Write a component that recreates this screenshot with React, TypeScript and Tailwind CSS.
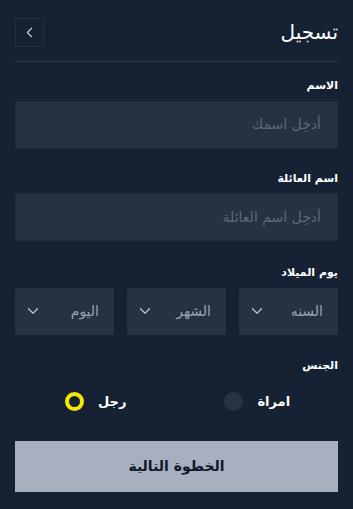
import { ChevronDown, ChevronLeft } from "lucide-react";

const FONT = { fontFamily: '"DejaVu Sans", "Liberation Sans", sans-serif' };

function Label({ children }: { children: string }) {
  return <div className="mb-[6px] text-[11px] font-bold text-white">{children}</div>;
}

function Input({ placeholder }: { placeholder: string }) {
  return (
    <div className="flex h-[48px] items-center rounded-[2px] border border-[#222d3e] bg-[#263142] px-[16px] text-[14px] text-[#5f6877]">
      {placeholder}
    </div>
  );
}

function Select({ text }: { text: string }) {
  return (
    <div className="flex h-[47px] items-center justify-between rounded-[2px] bg-[#263142] pr-[15px] pl-[9px] text-[14px] text-[#9aa2b0]">
      <span>{text}</span>
      <ChevronDown size={18} strokeWidth={1.8} className="text-[#b5bcc8]" />
    </div>
  );
}

function Radio({ text, checked }: { text: string; checked?: boolean }) {
  return (
    <div className="flex items-center justify-center gap-[14px]">
      <span className="text-[13px] font-bold text-white">{text}</span>
      {checked ? (
        <span className="h-[19px] w-[19px] rounded-full border-[4px] border-[#f2ea00] bg-[#162133]" />
      ) : (
        <span className="h-[19px] w-[19px] rounded-full bg-[#273244]" />
      )}
    </div>
  );
}

export default function App() {
  return (
    <div dir="rtl" style={FONT} className="min-h-[509px] w-[353px] bg-[#162133] px-[15px] pt-[17px]">
      <div className="flex items-center justify-between border-b border-[#2c3749] pb-[14px]">
        <h1 className="text-[20px] font-normal text-white">تسجيل</h1>
        <button className="flex h-[29px] w-[29px] items-center justify-center rounded-[2px] border border-[#263042] text-[#c9ced6]">
          <ChevronLeft size={17} strokeWidth={1.5} />
        </button>
      </div>

      <div className="mt-[16px]">
        <Label>الاسم</Label>
        <Input placeholder="أدخِل اسمك" />
      </div>

      <div className="mt-[22px]">
        <Label>اسم العائلة</Label>
        <Input placeholder="أدخِل اسم العائلة" />
      </div>

      <div className="mt-[24px]">
        <Label>يوم الميلاد</Label>
        <div className="grid grid-cols-3 gap-[13px]">
          <Select text="السنه" />
          <Select text="الشهر" />
          <Select text="اليوم" />
        </div>
      </div>

      <div className="mt-[23px]">
        <Label>الجنس</Label>
        <div className="grid grid-cols-2 py-[12px]">
          <Radio text="امراة" />
          <Radio text="رجل" checked />
        </div>
      </div>

      <button className="mt-[17px] flex h-[51px] w-full items-center justify-center bg-[#a8b0bf] text-[14px] font-bold text-[#111827]">
        الخطوة التالية
      </button>
    </div>
  );
}
